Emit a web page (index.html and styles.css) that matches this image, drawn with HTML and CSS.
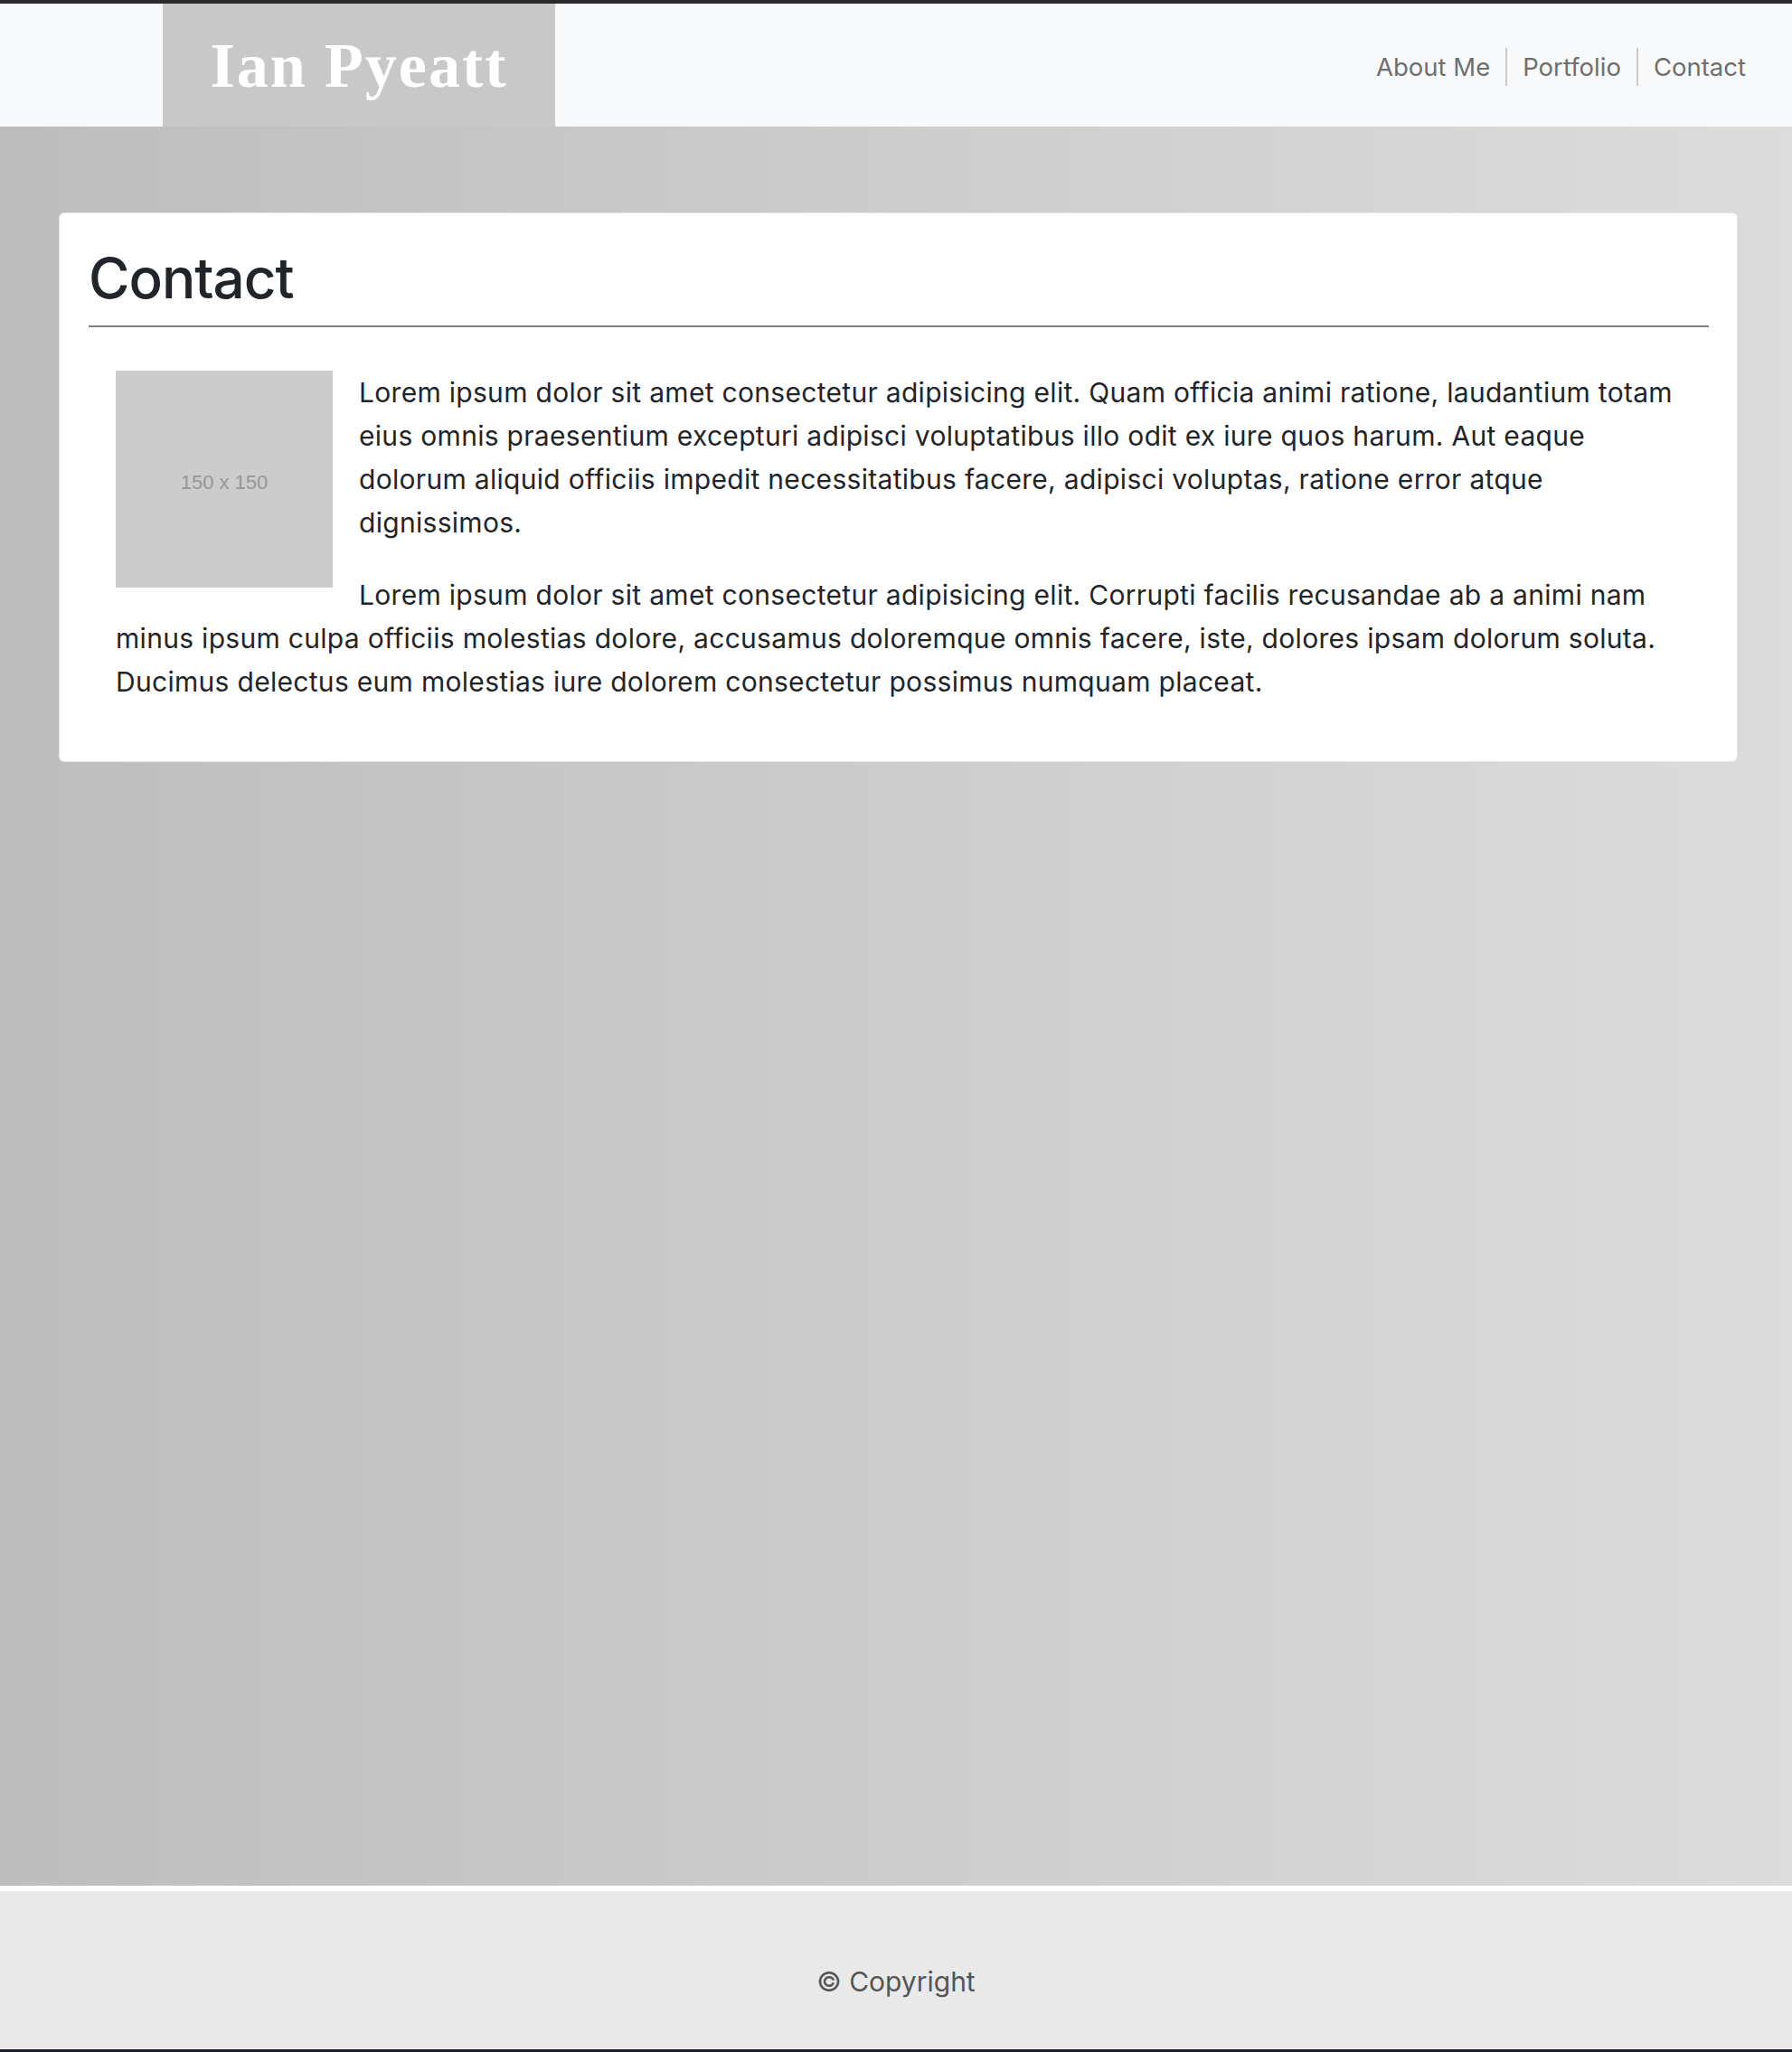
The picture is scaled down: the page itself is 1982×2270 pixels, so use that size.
FILE: index.html
```html
<!DOCTYPE html>
<html lang="en">
<head>
<meta charset="utf-8">
<title>Ian Pyeatt - Contact</title>
<link rel="stylesheet" href="styles.css">
</head>
<body>
<header class="site-header">
  <div class="brand">Ian Pyeatt</div>
  <nav class="nav">
    <a class="nav-link" href="#">About Me</a>
    <a class="nav-link" href="#">Portfolio</a>
    <a class="nav-link" href="#">Contact</a>
  </nav>
</header>
<main class="main">
  <section class="card">
    <h1 class="card-title">Contact</h1>
    <hr class="rule">
    <div class="content">
      <div class="placeholder">150 x 150</div>
      <p>Lorem ipsum dolor sit amet consectetur adipisicing elit. Quam officia animi ratione, laudantium totam eius omnis praesentium excepturi adipisci voluptatibus illo odit ex iure quos harum. Aut eaque dolorum aliquid officiis impedit necessitatibus facere, adipisci voluptas, ratione error atque dignissimos.</p>
      <p>Lorem ipsum dolor sit amet consectetur adipisicing elit. Corrupti facilis recusandae ab a animi nam minus ipsum culpa officiis molestias dolore, accusamus doloremque omnis facere, iste, dolores ipsam dolorum soluta. Ducimus delectus eum molestias iure dolorem consectetur possimus numquam placeat.</p>
    </div>
  </section>
</main>
<footer class="site-footer">© Copyright</footer>
</body>
</html>
```
FILE: styles.css
```css
* { box-sizing: border-box; }
html, body { margin: 0; padding: 0; }
body {
  min-height: 100vh;
  display: flex;
  flex-direction: column;
  border-top: 4px solid #2a2a2d;
  border-bottom: 3px solid #1c1f2c;
  font-family: Inter, "Noto Sans", sans-serif;
  color: #212529;
}
.site-header {
  height: 136px;
  background: #f8f9fa;
  display: flex;
  align-items: center;
  justify-content: space-between;
  padding: 0 34px 0 180px;
}
.brand {
  align-self: stretch;
  width: 434px;
  background: #c8c8c8;
  color: #ffffff;
  font-family: "Liberation Serif", "Times New Roman", serif;
  font-weight: 700;
  font-size: 70px;
  letter-spacing: 2px;
  display: flex;
  align-items: center;
  justify-content: center;
  padding-top: 2px;
}
.nav {
  display: flex;
  align-items: center;
  padding-top: 3px;
}
.nav-link {
  color: #6f6f6f;
  text-decoration: none;
  font-size: 27.5px;
  line-height: 42px;
  padding: 0 17px;
}
.nav-link + .nav-link {
  border-left: 2px solid #cacaca;
}
.main {
  flex: 1;
  background: linear-gradient(to right, #bdbdbd, #dcdcdc);
  padding: 95px 60px 60px 65px;
}
.card {
  background: #ffffff;
  border: 1px solid rgba(0, 0, 0, 0.1);
  border-radius: 6px;
  padding: 32px 31px 32px 32px;
}
.card-title {
  margin: 0 0 12px;
  font-size: 62px;
  line-height: 80px;
  letter-spacing: -1px;
  font-weight: 500;
  color: #212529;
}
.rule {
  margin: 0;
  border: 0;
  height: 2px;
  background: #808080;
}
.content {
  padding: 48px 30px 0 30px;
  font-size: 30px;
  line-height: 48px;
  letter-spacing: 0.3px;
}
.content p {
  margin: 0 0 32px;
}
.placeholder {
  float: left;
  width: 240px;
  height: 240px;
  margin: 0 29px 10px 0;
  padding-top: 8px;
  background: #cccccc;
  color: #969696;
  font-family: "Liberation Sans", Arial, sans-serif;
  font-size: 22px;
  letter-spacing: 0;
  line-height: 1;
  display: flex;
  align-items: center;
  justify-content: center;
}
.site-footer {
  background: #e9e9e9;
  border-top: 6px solid #ffffff;
  text-align: center;
  color: #555555;
  font-size: 30px;
  line-height: 48px;
  padding: 76px 0 51px;
}
```
